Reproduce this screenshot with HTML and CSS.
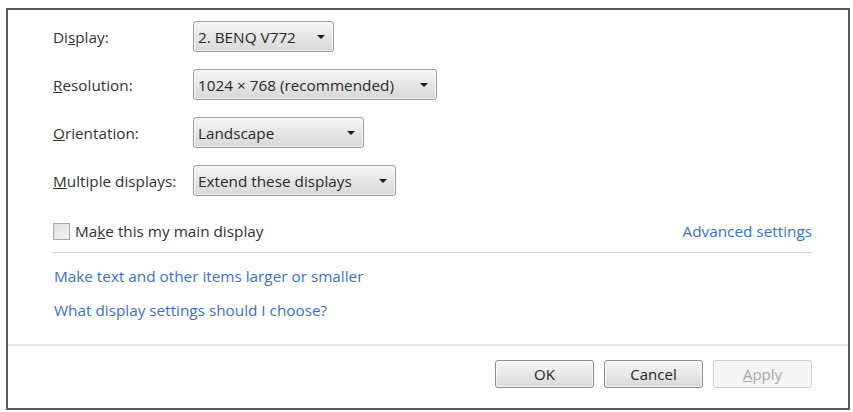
FILE: index.html
```html
<!DOCTYPE html>
<html>
<head>
<meta charset="utf-8">
<link rel="stylesheet" href="styles.css">
</head>
<body>
<div class="dialog">
  <div class="main">
    <div class="form-grid">
      <span class="lbl">Di<u>s</u>play:</span>
      <div class="combo w-display"><span class="val">2. BENQ V772</span><i class="arrow"></i></div>
      <span class="lbl"><u>R</u>esolution:</span>
      <div class="combo w-res"><span class="val">1024 × 768 (recommended)</span><i class="arrow"></i></div>
      <span class="lbl"><u>O</u>rientation:</span>
      <div class="combo w-orient"><span class="val">Landscape</span><i class="arrow"></i></div>
      <span class="lbl"><u>M</u>ultiple displays:</span>
      <div class="combo w-multi"><span class="val">Extend these displays</span><i class="arrow"></i></div>
    </div>
    <div class="check-row">
      <span class="checkbox"></span>
      <span class="check-text">Ma<u>k</u>e this my main display</span>
      <a class="link adv">Advanced settings</a>
    </div>
    <div class="sep"></div>
    <div class="links">
      <a class="link">Make text and other items larger or smaller</a>
      <a class="link">What display settings should I choose?</a>
    </div>
  </div>
  <div class="footer">
    <button class="btn">OK</button>
    <button class="btn">Cancel</button>
    <button class="btn disabled"><u>A</u>pply</button>
  </div>
</div>
</body>
</html>
```

FILE: styles.css
```css
html, body {
  margin: 0;
  padding: 0;
  background: #ffffff;
}
body {
  font-family: "Open Sans", "Noto Sans", sans-serif;
  font-size: 15.3px;
  color: #333333;
}
.dialog {
  margin: 8px 0 0 6px;
  width: 844px;
  height: 402px;
  box-sizing: border-box;
  border: 2px solid #5a5a5a;
  display: flex;
  flex-direction: column;
  background: #ffffff;
}
.main {
  padding: 11px 36px 24px 44px;
  border-bottom: 2px solid #e4e4e4;
}
.form-grid {
  display: grid;
  grid-template-columns: 141px auto;
  grid-auto-rows: 31px;
  row-gap: 17px;
  align-items: center;
  justify-items: start;
}
.lbl {
  padding-left: 1px;
}
.combo {
  height: 31px;
  box-sizing: border-box;
  border: 1px solid #9c9c9c;
  border-radius: 3px;
  background: linear-gradient(#f6f6f6, #e6e6e6 50%, #d8d8d8);
  display: flex;
  align-items: center;
  justify-content: space-between;
  padding: 0 8px 0 4px;
  box-shadow: inset 0 0 0 1px rgba(255,255,255,0.7);
}
.val {
  color: #2a2a2a;
  white-space: nowrap;
}
.arrow {
  width: 0;
  height: 0;
  border-left: 4px solid transparent;
  border-right: 4px solid transparent;
  border-top: 4px solid #1a1a1a;
}
.w-display { width: 141px; }
.w-res { width: 244px; }
.w-orient { width: 171px; }
.w-multi { width: 203px; }
.check-row {
  margin-top: 24px;
  height: 22px;
  display: flex;
  align-items: center;
  padding-left: 1px;
}
.checkbox {
  width: 17px;
  height: 17px;
  box-sizing: border-box;
  border: 1px solid #a8a8a8;
  background: linear-gradient(135deg, #dedede, #f4f4f4);
  margin-right: 5px;
}
.check-text {
  flex: 1;
}
.link {
  color: #3a72c6;
  text-decoration: none;
  cursor: pointer;
}
.sep {
  margin-top: 10px;
  height: 1px;
  background: #d8d8d8;
}
.links {
  display: flex;
  flex-direction: column;
  align-items: flex-start;
  gap: 14px;
  margin-top: 13px;
  padding-left: 2px;
}
.links .link {
  line-height: 20px;
}
.footer {
  flex: 1;
  display: flex;
  justify-content: flex-end;
  align-items: flex-start;
  gap: 10px;
  padding: 14px 36px 0 0;
}
.btn {
  width: 99px;
  height: 28px;
  box-sizing: border-box;
  border: 1px solid #8e8e8e;
  border-radius: 3px;
  background: linear-gradient(#f5f5f5, #e8e8e8 50%, #d9d9d9);
  font-family: "Open Sans", "Noto Sans", sans-serif;
  font-size: 15px;
  color: #262626;
  padding: 0;
  box-shadow: inset 0 0 0 1px rgba(255,255,255,0.7);
}
.btn.disabled {
  border-color: #cfcfcf;
  background: #f4f4f4;
  color: #a8a8a8;
}
```
